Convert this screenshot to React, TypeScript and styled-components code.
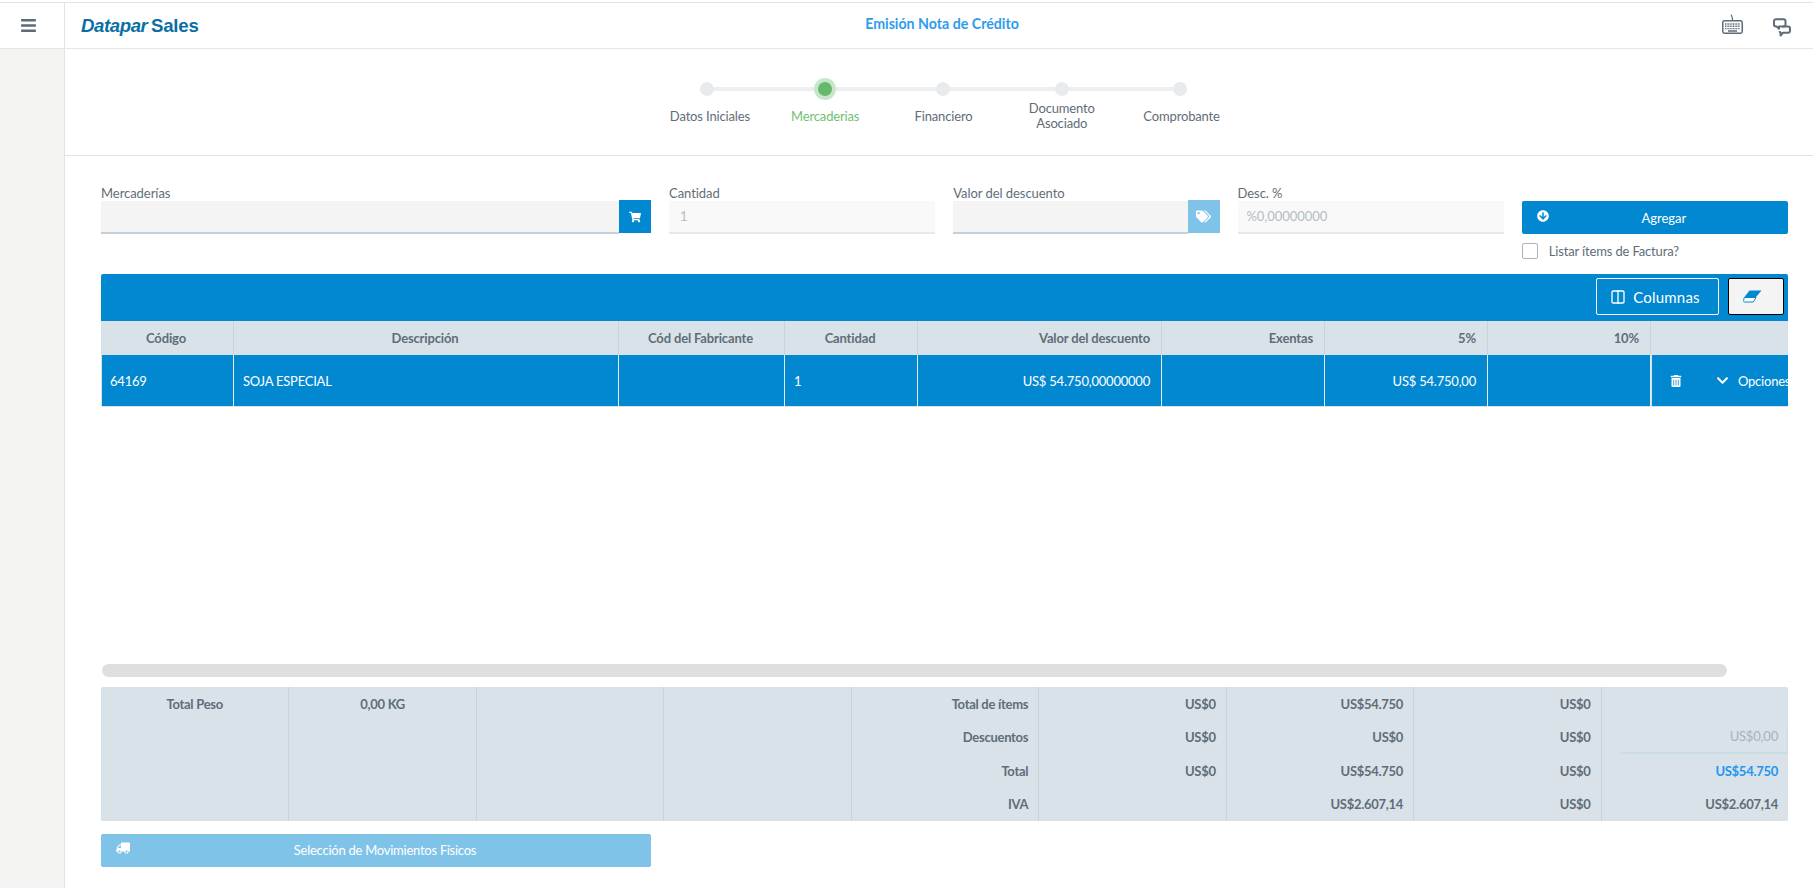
import React from "react";
import styled, { createGlobalStyle } from "styled-components";
import { FaArrowCircleDown, FaBars, FaChevronDown, FaShoppingCart, FaTags, FaTrashAlt, FaTruck } from "react-icons/fa";
import { Columns2 } from "lucide-react";

const GlobalStyle = createGlobalStyle`
  html, body { margin: 0; padding: 0; background: #fff; }
  body { font-family: Lato, "Open Sans", "Liberation Sans", sans-serif; color: #5f6d78; font-size: 13px; }
  * { box-sizing: border-box; }
`;

const Page = styled.div`
  width: 1813px;
  height: 888px;
  padding-top: 2px;
  overflow: hidden;
  display: flex;
  flex-direction: column;
`;

const TopBar = styled.header`
  height: 47px;
  flex: none;
  display: flex;
  border-top: 1px solid #e3e3e3;
  border-bottom: 1px solid #e6e6e6;
`;

const MenuCell = styled.div`
  width: 65px;
  flex: none;
  display: flex;
  align-items: center;
  justify-content: center;
  border-right: 1px solid #e3e3e3;
  color: #5f6b76;
  padding-right: 8px;
`;

const TopContent = styled.div`
  flex: 1;
  display: grid;
  grid-template-columns: 1fr auto 1fr;
  align-items: center;
  padding: 0 22px 0 16px;
`;

const Logo = styled.div`
  font-family: "Liberation Sans", Arial, sans-serif;
  font-size: 18.6px;
  font-weight: 700;
  color: #0b6fa6;
  letter-spacing: -0.2px;
  white-space: nowrap;
  em { font-style: italic; margin-right: 3.5px; letter-spacing: -0.4px; }
`;

const Title = styled.h1`
  margin: 0 0 4px;
  padding-left: 12px;
  font-size: 14.2px;
  font-weight: 700;
  color: #2d9cee;
`;

const TopIcons = styled.div`
  display: flex;
  justify-content: flex-end;
  align-items: center;
  gap: 30px;
  color: #5f6b76;
`;

const KeyboardSlot = styled.span`
  display: flex;
  margin-top: -3px;
`;

const ChatSlot = styled.span`
  display: flex;
  margin-top: 3px;
`;

const Body = styled.div`
  flex: 1;
  display: flex;
  min-height: 0;
`;

const Sidebar = styled.aside`
  width: 65px;
  flex: none;
  background: #f4f4f2;
  border-right: 1px solid #e3e3e3;
`;

const Main = styled.main`
  flex: 1;
  min-width: 0;
`;

const StepperBar = styled.section`
  height: 107px;
  display: flex;
  justify-content: center;
  padding: 29px 0 0 9px;
  border-bottom: 1px solid #e3e3e3;
`;

const Step = styled.div`
  position: relative;
  width: 118.3px;
  display: flex;
  flex-direction: column;
  align-items: center;
  &:not(:last-child)::before {
    content: "";
    position: absolute;
    top: 9px;
    left: 50%;
    width: 100%;
    height: 4px;
    background: #eceef0;
  }
`;

const DotSlot = styled.div`
  position: relative;
  height: 22px;
  width: 22px;
  display: flex;
  align-items: center;
  justify-content: center;
  border-radius: 50%;
  background: ${p => (p.$active ? "#c9e6ca" : "transparent")};
`;

const Dot = styled.span`
  width: 14px;
  height: 14px;
  border-radius: 50%;
  background: ${p => (p.$active ? "#66b96a" : "#e8ebed")};
`;

const StepLabel = styled.div`
  margin-top: 1px;
  margin-left: ${p => p.$shift || 0}px;
  min-height: 30px;
  width: 100px;
  display: flex;
  align-items: center;
  justify-content: center;
  text-align: center;
  line-height: 15px;
  font-size: 13px;
  letter-spacing: -0.15px;
  color: ${p => (p.$active ? "#72bf76" : "#5f6d78")};
`;

const Content = styled.div`
  padding: 29px 25px 0 36px;
`;

const FormGrid = styled.div`
  display: grid;
  grid-template-columns: 550px repeat(4, 1fr);
  column-gap: 18px;
  height: 89px;
`;

const Field = styled.div`
  display: flex;
  flex-direction: column;
`;

const FieldLabel = styled.label`
  height: 16px;
  line-height: 16px;
  font-size: 13px;
  letter-spacing: -0.05px;
  color: #5f6d78;
`;

const InputRow = styled.div`
  display: flex;
  height: 33px;
`;

const Input = styled.input`
  flex: 1;
  min-width: 0;
  height: 33px;
  border: 0;
  border-bottom: 2px solid ${p => (p.disabled ? "#e4e9ec" : "#c5d1d9")};
  background: ${p => (p.disabled ? "#f9f9f9" : "#f4f4f4")};
  padding: 0 0 1px ${p => p.$inset || 9}px;
  font-family: inherit;
  font-size: 13px;
  letter-spacing: -0.05px;
  color: #b3bdc4;
  outline: none;
  &::placeholder { color: #b3bdc4; opacity: 1; }
`;

const InputAddon = styled.span`
  width: 32px;
  height: 33px;
  margin-top: -1px;
  flex: none;
  display: flex;
  align-items: center;
  justify-content: center;
  color: #fff;
  font-size: 12px;
  background: ${p => (p.$muted ? "#80c3e8" : "#0288d1")};
`;

const ActionButton = styled.button`
  width: ${p => p.$width || "100%"};
  height: 33px;
  border: 0;
  border-radius: 2px;
  padding: 0 15px ${p => (p.$muted ? 2 : 0)}px;
  display: flex;
  align-items: center;
  background: ${p => (p.$muted ? "#80c3e8" : "#0288d1")};
  color: #fff;
  font-family: inherit;
  font-size: 13px;
  font-weight: 400;
  letter-spacing: ${p => (p.$muted ? "-0.25px" : "0")};
`;

const ButtonIcon = styled.span`
  width: 18px;
  flex: none;
  display: flex;
  align-items: center;
  margin-top: -3px;
  font-size: 12px;
`;

const ButtonText = styled.span`
  flex: 1;
  text-align: center;
`;

const AddColumn = styled.div`
  padding-top: 16px;
`;

const CheckRow = styled.label`
  display: flex;
  align-items: center;
  margin-top: 8px;
  height: 17px;
  font-size: 13px;
  letter-spacing: -0.15px;
  color: #5f6d78;
`;

const CheckBox = styled.span`
  width: 16px;
  height: 16px;
  border: 1px solid #aab5bd;
  border-radius: 2px;
  background: #fff;
  margin-right: 11px;
`;

const TableArea = styled.section`
  height: 390px;
`;

const Toolbar = styled.div`
  height: 47px;
  background: #0288d1;
  border-radius: 2px 2px 0 0;
  display: flex;
  justify-content: flex-end;
  align-items: flex-start;
  gap: 9px;
  padding: 4px 4px 0 0;
`;

const ColumnsButton = styled.button`
  width: 123px;
  height: 37px;
  border: 1px solid #fff;
  border-radius: 2px;
  background: transparent;
  color: #fff;
  display: flex;
  align-items: center;
  justify-content: center;
  gap: 7px;
  font-family: inherit;
  font-size: 15px;
  letter-spacing: 0.2px;
  padding: 0 5px 0 0;
`;

const EraserButton = styled.button`
  width: 56px;
  height: 37px;
  border: 1px solid #000;
  border-radius: 2px;
  background: #f4f4f4;
  display: flex;
  align-items: center;
  justify-content: center;
  padding: 0 7px 0 0;
`;

const TableRow = styled.div`
  display: grid;
  grid-template-columns: 133px 385px 166px 133px 244px 163px 163px 163px 137px;
  height: ${p => (p.$head ? "34px" : "52px")};
  background: ${p => (p.$head ? "#d9e2e8" : "#0288d1")};
  color: ${p => (p.$head ? "#5f6d78" : "#fff")};
  font-weight: ${p => (p.$head ? 700 : 400)};
  letter-spacing: ${p => (p.$head ? "-0.15px" : "-0.22px")};
  box-shadow: ${p => (p.$head ? "none" : "inset 1px -1px 0 #d9e2e8")};
`;

const Cell = styled.div`
  display: flex;
  align-items: center;
  justify-content: ${p => p.$justify || "flex-start"};
  padding: 0 11px 0 9px;
  white-space: nowrap;
  font-size: 13px;
  border-right: 1px solid ${p => (p.$head ? "#c5d5dc" : "#e3ebef")};
  &:last-child { border-right: 0; }
`;

const ActionCell = styled.div`
  display: flex;
  align-items: center;
  overflow: hidden;
  white-space: nowrap;
  font-size: 13px;
  padding-left: 18px;
  margin-bottom: 1px;
  border-left: 1px solid #d9e2e8;
`;

const TrashSlot = styled.span`
  display: flex;
  width: 46px;
  flex: none;
  font-size: 12px;
  color: #fff;
`;

const OptionsSlot = styled.span`
  display: flex;
  align-items: center;
  gap: 9px;
  font-size: 13px;
`;

const ScrollTrack = styled.div`
  height: 13px;
  width: 1625px;
  margin: 0 0 10px 1px;
  border-radius: 7px;
  background: #dfdfdf;
`;

const Summary = styled.section`
  display: grid;
  grid-template-columns: repeat(9, 1fr);
  height: 134px;
  background: #d9e2e8;
  border-radius: 2px 2px 0 0;
  margin-bottom: 13px;
`;

const SummaryColumn = styled.div`
  display: flex;
  flex-direction: column;
  border-left: 1px solid #c3d6de;
  &:first-child { border-left: 0; }
`;

const SummaryCell = styled.div`
  height: 33.5px;
  display: flex;
  align-items: center;
  justify-content: ${p => (p.$center ? "center" : "flex-end")};
  padding-right: ${p => (p.$center ? 0 : 10)}px;
  font-size: 13px;
  font-weight: 700;
  letter-spacing: -0.28px;
  white-space: nowrap;
  color: ${p => (p.$tone === "blue" ? "#2196f3" : "#5f6d78")};
`;

const SubtotalCell = styled.div`
  height: 33.5px;
  margin-left: 19px;
  display: flex;
  align-items: center;
  justify-content: flex-end;
  padding-right: 9px;
  font-size: 13px;
  letter-spacing: -0.2px;
  color: #a6b3ba;
  border-right: 1px solid #cfdde3;
  border-bottom: 2px solid #cbdbe2;
`;

const KeyboardIcon = () => (
  <svg width="21" height="20" viewBox="0 0 21 20" fill="none" stroke="#5f6b76">
    <path d="M9.5 0.5 C9 2.5 11 3 10.5 6.5" strokeWidth="1.2" />
    <rect x="0.8" y="6.8" width="19.4" height="12.4" rx="1.6" strokeWidth="1.5" />
    <path d="M3 10h15M3 12.3h15M3 14.6h15" strokeWidth="1.4" strokeDasharray="1 .6" />
    <path d="M6 17h9" strokeWidth="1.5" />
  </svg>
);

const ChatIcon = () => (
  <svg width="18" height="19" viewBox="0 0 18 19" fill="none" stroke="#5f6b76" strokeWidth="2" strokeLinejoin="round">
    <path d="M3 1.2h7.5a2 2 0 0 1 2 2v3.3a2 2 0 0 1-2 2H6v2.2L3.6 8.5H3a2 2 0 0 1-2-2V3.2a2 2 0 0 1 2-2z" />
    <path d="M9.5 8.5h5.5a2 2 0 0 1 2 2v2.2a2 2 0 0 1-2 2h-5l-2.4 2.8v-2.8a2 2 0 0 1-1-1.6" />
  </svg>
);

const EraserIcon = () => (
  <svg width="19" height="13" viewBox="0 0 19 13">
    <path d="M6.5 .5H18.5L13 7H1.5z" fill="#0288d1" />
    <path d="M1.3 7.5H13L10.3 12H1.5C.6 12 .3 11 .7 10.2z" fill="#fff" stroke="#0288d1" strokeWidth="1" />
  </svg>
);

const steps = [
  { label: "Datos Iniciales", shift: 6 },
  { label: "Mercaderias", active: true },
  { label: "Financiero" },
  { label: "Documento Asociado" },
  { label: "Comprobante", shift: 3 },
];

const headers: [string, string][] = [
  ["Código", "center"],
  ["Descripción", "center"],
  ["Cód del Fabricante", "center"],
  ["Cantidad", "center"],
  ["Valor del descuento", "flex-end"],
  ["Exentas", "flex-end"],
  ["5%", "flex-end"],
  ["10%", "flex-end"],
  ["", "flex-end"],
];

const summaryColumns = [
  ["US$0", "US$0", "US$0", ""],
  ["US$54.750", "US$0", "US$54.750", "US$2.607,14"],
  ["US$0", "US$0", "US$0", "US$0"],
];

export default function App() {
  return (
    <Page>
      <GlobalStyle />
      <TopBar>
        <MenuCell><FaBars size={17} /></MenuCell>
        <TopContent>
          <Logo><em>Datapar</em>Sales</Logo>
          <Title>Emisión Nota de Crédito</Title>
          <TopIcons>
            <KeyboardSlot><KeyboardIcon /></KeyboardSlot>
            <ChatSlot><ChatIcon /></ChatSlot>
          </TopIcons>
        </TopContent>
      </TopBar>
      <Body>
        <Sidebar />
        <Main>
          <StepperBar>
            {steps.map(s => (
              <Step key={s.label}>
                <DotSlot $active={s.active}><Dot $active={s.active} /></DotSlot>
                <StepLabel $active={s.active} $shift={s.shift}>{s.label}</StepLabel>
              </Step>
            ))}
          </StepperBar>
          <Content>
            <FormGrid>
              <Field>
                <FieldLabel>Mercaderías</FieldLabel>
                <InputRow>
                  <Input readOnly />
                  <InputAddon><FaShoppingCart /></InputAddon>
                </InputRow>
              </Field>
              <Field>
                <FieldLabel>Cantidad</FieldLabel>
                <InputRow><Input disabled value="1" $inset={11} /></InputRow>
              </Field>
              <Field>
                <FieldLabel>Valor del descuento</FieldLabel>
                <InputRow>
                  <Input readOnly />
                  <InputAddon $muted><FaTags size={15} /></InputAddon>
                </InputRow>
              </Field>
              <Field>
                <FieldLabel>Desc. %</FieldLabel>
                <InputRow><Input disabled placeholder="%0,00000000" /></InputRow>
              </Field>
              <AddColumn>
                <ActionButton>
                  <ButtonIcon><FaArrowCircleDown /></ButtonIcon>
                  <ButtonText>Agregar</ButtonText>
                </ActionButton>
                <CheckRow><CheckBox />Listar ítems de Factura?</CheckRow>
              </AddColumn>
            </FormGrid>
            <TableArea>
              <Toolbar>
                <ColumnsButton><Columns2 size={16} strokeWidth={2} />Columnas</ColumnsButton>
                <EraserButton><EraserIcon /></EraserButton>
              </Toolbar>
              <TableRow $head>
                {headers.map(([h, j], i) => <Cell key={i} $head $justify={j}>{h}</Cell>)}
              </TableRow>
              <TableRow>
                <Cell>64169</Cell>
                <Cell>SOJA ESPECIAL</Cell>
                <Cell />
                <Cell>1</Cell>
                <Cell $justify="flex-end">US$ 54.750,00000000</Cell>
                <Cell />
                <Cell $justify="flex-end">US$ 54.750,00</Cell>
                <Cell />
                <ActionCell>
                  <TrashSlot><FaTrashAlt /></TrashSlot>
                  <OptionsSlot><FaChevronDown size={13} />Opciones</OptionsSlot>
                </ActionCell>
              </TableRow>
            </TableArea>
            <ScrollTrack />
            <Summary>
              <SummaryColumn><SummaryCell $center>Total Peso</SummaryCell></SummaryColumn>
              <SummaryColumn><SummaryCell $center>0,00 KG</SummaryCell></SummaryColumn>
              <SummaryColumn />
              <SummaryColumn />
              <SummaryColumn>
                {["Total de ítems", "Descuentos", "Total", "IVA"].map(t => <SummaryCell key={t}>{t}</SummaryCell>)}
              </SummaryColumn>
              {summaryColumns.map((col, i) => (
                <SummaryColumn key={i}>
                  {col.map((t, j) => <SummaryCell key={j}>{t}</SummaryCell>)}
                </SummaryColumn>
              ))}
              <SummaryColumn>
                <SummaryCell />
                <SubtotalCell>US$0,00</SubtotalCell>
                <SummaryCell $tone="blue">US$54.750</SummaryCell>
                <SummaryCell>US$2.607,14</SummaryCell>
              </SummaryColumn>
            </Summary>
            <ActionButton $muted $width="550px">
              <ButtonIcon><FaTruck style={{ transform: "scaleX(-1)" }} size={14} /></ButtonIcon>
              <ButtonText>Selección de Movimientos Físicos</ButtonText>
            </ActionButton>
          </Content>
        </Main>
      </Body>
    </Page>
  );
}
